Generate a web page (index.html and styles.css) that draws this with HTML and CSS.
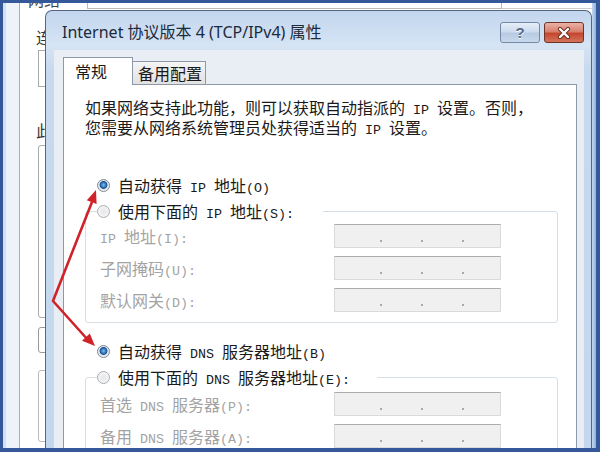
FILE: index.html
```html
<!DOCTYPE html>
<html lang="zh-CN">
<head>
    <meta charset="UTF-8">
    <meta name="viewport" content="width=device-width, initial-scale=1.0">
    <title>Internet 协议版本 4 (TCP/IPv4) 属性</title>
    <link rel="stylesheet" href="styles.css">
</head>
<body>
<div class="screen">
    <!-- strip of the parent window above the dialog -->
    <div class="top-strip">
        <div class="ts-frame"></div>
        <div class="ts-pane"></div>
        <div class="ts-blank"></div>
        <div class="ts-text"><span>网络</span></div>
        <div class="ts-box"></div>
        <div class="ts-line"></div>
        <div class="ts-edge"></div>
    </div>

    <div class="main">
        <div class="parent-left">
            <div class="pl-frame"></div>
            <div class="pl-pane"></div>
            <div class="pl-client">
                <span class="pl-char lian">连</span>
                <div class="pl-input"></div>
                <span class="pl-char ci">此</span>
                <div class="pl-list"></div>
                <div class="pl-btn"></div>
                <div class="pl-box"></div>
            </div>
        </div>

        <div class="dialog">
            <div class="titlebar">
                <span class="title">Internet 协议版本 4 (TCP/IPv4) 属性</span>
                <button type="button" class="cap help">?</button>
                <button type="button" class="cap close">
                    <svg width="14" height="12" viewBox="0 0 14 12">
                        <path d="M3 2 L11 10 M11 2 L3 10" stroke="#6b2a20" stroke-width="4.2" stroke-linecap="round"/>
                        <path d="M3 2 L11 10 M11 2 L3 10" stroke="#fff" stroke-width="2.4" stroke-linecap="round"/>
                    </svg>
                </button>
            </div>

            <div class="client">
                <div class="tabs">
                    <div class="tab active">常规</div>
                    <div class="tab">备用配置</div>
                </div>
                <div class="panel">
                    <div class="intro">
                        <span class="line">如果网络支持此功能，则可以获取自动指派的<span class="en"> IP </span>设置。否则，</span>
                        <span class="line">您需要从网络系统管理员处获得适当的<span class="en"> IP </span>设置。</span>
                    </div>

                    <div class="radio-row first"><span class="radio on"></span><span class="text">自动获得<span class="en"> IP </span>地址<span class="en">(O)</span></span></div>
                    <fieldset class="group ip-group">
                        <legend class="ip-legend"><span class="radio"></span><span class="text">使用下面的<span class="en"> IP </span>地址<span class="en">(S):</span></span></legend>
                        <div class="field">
                            <span class="label"><span class="en">IP </span>地址<span class="en">(I):</span></span>
                            <span class="ip"><i></i><i></i><i></i></span>
                        </div>
                        <div class="field">
                            <span class="label">子网掩码<span class="en">(U):</span></span>
                            <span class="ip"><i></i><i></i><i></i></span>
                        </div>
                        <div class="field">
                            <span class="label">默认网关<span class="en">(D):</span></span>
                            <span class="ip"><i></i><i></i><i></i></span>
                        </div>
                    </fieldset>

                    <div class="radio-row"><span class="radio on"></span><span class="text">自动获得<span class="en"> DNS </span>服务器地址<span class="en">(B)</span></span></div>
                    <fieldset class="group">
                        <legend class="dns-legend"><span class="radio"></span><span class="text">使用下面的<span class="en"> DNS </span>服务器地址<span class="en">(E):</span></span></legend>
                        <div class="field">
                            <span class="label">首选<span class="en"> DNS </span>服务器<span class="en">(P):</span></span>
                            <span class="ip"><i></i><i></i><i></i></span>
                        </div>
                        <div class="field">
                            <span class="label">备用<span class="en"> DNS </span>服务器<span class="en">(A):</span></span>
                            <span class="ip"><i></i><i></i><i></i></span>
                        </div>
                    </fieldset>
                </div>
            </div>
        </div>

        <div class="parent-right"></div>
    </div>

    <!-- red annotation arrows -->
    <svg class="arrows" width="600" height="452" viewBox="0 0 600 452">
        <path d="M92 202 L53 301 L88 340" fill="none" stroke="#cf2229" stroke-width="2.6" stroke-linejoin="round"/>
        <polygon points="96,190 96.6,204 86.8,200.2" fill="#cf2229"/>
        <polygon points="95,346 82,340.8 89.8,333.4" fill="#cf2229"/>
    </svg>
</div>
</body>
</html>
```

FILE: styles.css
```css
* {
    box-sizing: border-box;
}
body {
    margin: 0;
    background-color: #34589a;
}
.screen {
    position: relative;
    width: 600px;
    height: 452px;
    border-style: solid;
    border-color: #34589a;
    border-width: 3px 4px 4px 3px;
    background-color: #fff;
    display: flex;
    flex-direction: column;
    overflow: hidden;
    font-family: "Noto Sans CJK SC", sans-serif;
    color: #1a1a1a;
}
.en {
    font-family: "Liberation Mono", monospace;
    font-size: 13.33px;
}

/* parent window bits */
.top-strip {
    height: 7px;
    flex: none;
    display: flex;
}
.ts-frame, .pl-frame {
    width: 3px;
    background-color: #d3e1f3;
}
.ts-pane, .pl-pane {
    width: 14px;
    background-color: #eef3f9;
    border-right: 1px solid #a7b0ba;
}
.ts-blank {
    width: 8px;
}
.ts-text {
    width: 59px;
    overflow: hidden;
}
.ts-text span {
    display: block;
    font-size: 16px;
    line-height: 16px;
    margin-top: -12px;
    color: #444;
}
.ts-box {
    width: 415px;
    height: 6px;
    border: 1px solid #b9b9b9;
    border-top: none;
}
.ts-line {
    flex: 1;
    height: 6px;
    border-bottom: 1px solid #cfcfcf;
}
.ts-edge, .parent-right {
    width: 4px;
    flex: none;
    background: linear-gradient(to right, #c2d6ee, #8fb1dc);
}
.main {
    flex: 1;
    min-height: 0;
    display: flex;
}
.parent-left {
    width: 42px;
    flex: none;
    display: flex;
}
.pl-client {
    width: 25px;
    overflow: hidden;
    display: flex;
    flex-direction: column;
}
.pl-char {
    font-size: 16px;
    line-height: 16px;
    color: #333;
    margin-left: 16px;
}
.lian {
    margin-top: 19px;
}
.ci {
    margin-top: 35px;
}
.pl-input, .pl-list, .pl-btn, .pl-box {
    flex: none;
    width: 30px;
    margin-left: 18px;
    border: 1px solid #aaa;
    border-radius: 3px;
}
.pl-input {
    margin-top: 5px;
    height: 37px;
    border-radius: 0;
}
.pl-list {
    margin-top: 7px;
    height: 173px;
}
.pl-btn {
    margin-top: 9px;
    height: 26px;
    border-color: #999;
}
.pl-box {
    margin-top: 17px;
    height: 72px;
    border-color: #bbb;
}

/* dialog */
.dialog {
    width: 547px;
    flex: none;
    display: flex;
    flex-direction: column;
    border: 1px solid #55677f;
    border-bottom: none;
    border-radius: 7px 7px 0 0;
    background: linear-gradient(to bottom, #c2d6ee, #d6e4f4 34px, #c6d9ef 60px, #c3d7ee);
}
.titlebar {
    height: 39px;
    flex: none;
    display: flex;
    align-items: flex-start;
    padding: 11px 7px 0 16px;
}
.title {
    flex: 1;
    font-family: "Noto Sans", "Noto Sans CJK SC", sans-serif;
    font-size: 16px;
    line-height: 21px;
    color: #1b2a3d;
}
.cap {
    width: 40px;
    height: 21px;
    border-radius: 3px;
    padding: 0;
    display: flex;
    align-items: center;
    justify-content: center;
}
.help {
    border: 1px solid #7489a6;
    background: linear-gradient(to bottom, #e6eef8, #cddcee 45%, #b7cbe3 55%, #c9d9ec);
    font-family: "Liberation Sans", sans-serif;
    font-weight: bold;
    font-size: 15px;
    color: #56698a;
    text-shadow: 0 1px 0 #fff;
}
.close {
    margin-left: 4px;
    border: 1px solid #6e3428;
    background: linear-gradient(to bottom, #eab2a5, #d8816f 45%, #c4472f 55%, #d4735a);
}
.client {
    flex: 1;
    min-height: 0;
    margin: 0 7px 0 8px;
    padding: 7px 7px 0 9px;
    background-color: #e9eef5;
    display: flex;
    flex-direction: column;
}
.tabs {
    height: 28px;
    flex: none;
    display: flex;
    align-items: flex-end;
    margin-bottom: -1px;
    position: relative;
    z-index: 1;
}
.tab {
    width: 74px;
    height: 23px;
    margin-bottom: 1px;
    padding-left: 5px;
    border: 1px solid #8d99a8;
    border-bottom: none;
    background: linear-gradient(to bottom, #f5f5f5, #e1e1e1);
    font-size: 16px;
    line-height: 22px;
}
.tab.active {
    width: 70px;
    height: 28px;
    margin-bottom: 0;
    margin-right: -1px;
    padding-left: 11px;
    background: #fff;
    line-height: 27px;
    position: relative;
    z-index: 1;
}
.panel {
    flex: 1;
    min-height: 0;
    background-color: #fff;
    border: 1px solid #8d99a8;
    border-bottom: none;
    padding: 12px 18px 0 21px;
    font-size: 16px;
}
.intro .line {
    display: block;
    height: 20px;
    line-height: 20px;
    white-space: nowrap;
}
.radio-row {
    height: 26px;
    display: flex;
    align-items: center;
    padding-left: 12px;
    margin-top: 15px;
}
.radio-row.first {
    margin-top: 35px;
}
.text {
    white-space: pre;
}
.radio {
    width: 13px;
    height: 13px;
    flex: none;
    margin-right: 8px;
    border-radius: 50%;
    border: 1px solid #a9aeb5;
    background: radial-gradient(circle, #e6e6e6, #fafafa);
}
.radio.on {
    border-color: #7e8895;
    background: radial-gradient(circle at 50% 45%, #7fc0f2 0, #2f73bb 2.5px, #1c4f8c 3.5px, #d9e1ea 4.3px, #f6f6f6 6px);
}
.group {
    margin: 0;
    padding: 2px 14px 8px 14px;
    border: 1px solid #d6dfe6;
    border-radius: 3px;
}
.ip-group {
    padding-top: 0;
    padding-bottom: 10px;
}
.group legend {
    height: 26px;
    display: flex;
    align-items: center;
    padding: 0;
    margin-left: -3px;
}
.ip-legend {
    width: 226px;
}
.dns-legend {
    width: 280px;
}
.field {
    display: grid;
    grid-template-columns: 234px 167px;
    align-items: center;
    height: 24px;
    margin-bottom: 8px;
}
.field:last-child {
    margin-bottom: 0;
}
.label {
    color: #a3a3a3;
    white-space: pre;
}
.ip {
    height: 24px;
    display: flex;
    align-items: flex-end;
    gap: 39px;
    padding: 0 0 5px 45px;
    background-color: #f0f0f0;
    border: 1px solid #dadada;
    border-top-color: #acacac;
}
.ip i {
    width: 2px;
    height: 2px;
    background-color: #a8a8a8;
}

.arrows {
    position: absolute;
    left: -3px;
    top: -3px;
    pointer-events: none;
}
```
